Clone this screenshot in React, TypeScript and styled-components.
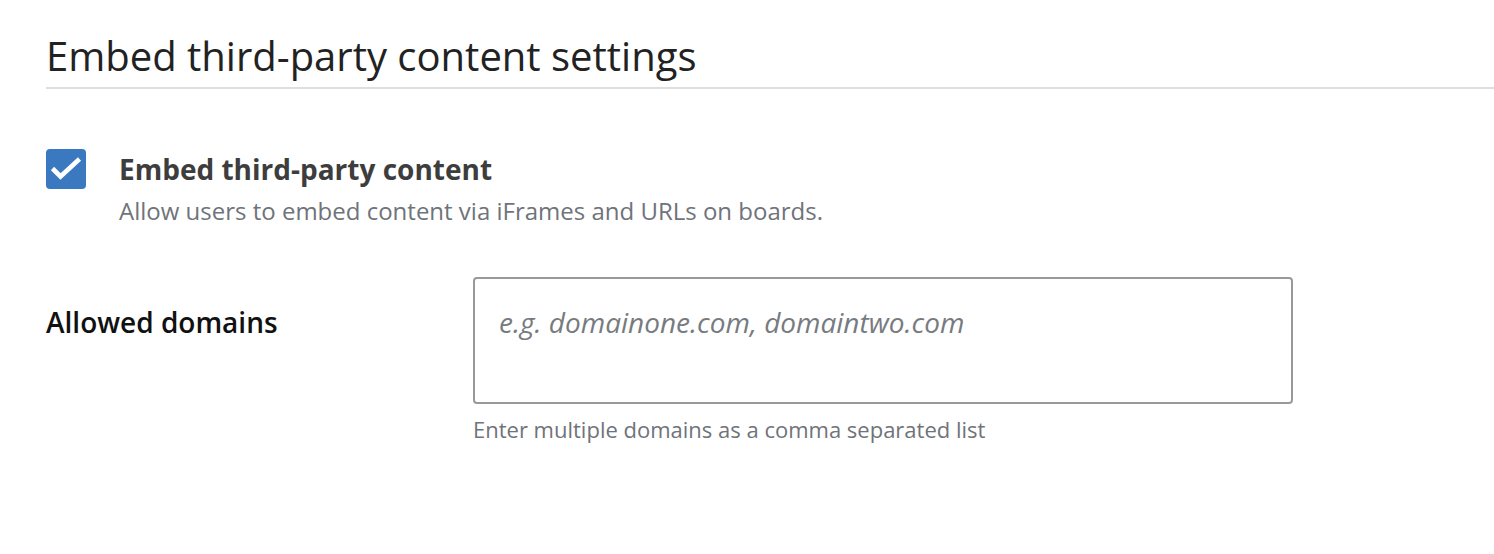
import React from 'react';
import styled, { createGlobalStyle } from 'styled-components';

const GlobalStyle = createGlobalStyle`
  body {
    margin: 0;
    background: #fff;
    font-family: 'Open Sans', 'Noto Sans', sans-serif;
  }
`;

const Page = styled.div`
  padding: 31px 0 0 46px;
`;

const Title = styled.h1`
  margin: 0;
  padding-bottom: 6px;
  font-size: 40px;
  font-weight: 400;
  line-height: 50px;
  color: #222;
  border-bottom: 2px solid #dedede;
`;

const CheckRow = styled.div`
  display: flex;
  align-items: flex-start;
  gap: 33px;
  margin-top: 60px;
`;

const Box = styled.div`
  width: 40px;
  height: 40px;
  flex-shrink: 0;
  border-radius: 4px;
  background: #3a78c0;
`;

const CheckText = styled.div`
  display: flex;
  flex-direction: column;
`;

const CheckLabel = styled.div`
  font-size: 28px;
  font-weight: 700;
  line-height: 40px;
  color: #3d3d3d;
`;

const CheckHint = styled.div`
  margin-top: 6px;
  font-size: 24px;
  line-height: 32px;
  color: #6f737a;
`;

const FieldRow = styled.div`
  display: grid;
  grid-template-columns: 427px 820px;
  margin-top: 50px;
`;

const FieldLabel = styled.label`
  padding-top: 27px;
  font-size: 28px;
  font-weight: 600;
  line-height: 36px;
  color: #111;
`;

const FieldBody = styled.div`
  display: flex;
  flex-direction: column;
`;

const Input = styled.textarea`
  box-sizing: border-box;
  width: 820px;
  height: 127px;
  padding: 25px 24px;
  border: 2px solid #999;
  border-radius: 4px;
  resize: none;
  font-family: 'Open Sans', 'Noto Sans', sans-serif;
  font-size: 28px;
  line-height: 36px;
  color: #222;
  outline: none;

  &::placeholder {
    font-style: italic;
    color: #777b80;
  }
`;

const Help = styled.div`
  margin-top: 10px;
  font-size: 22px;
  line-height: 30px;
  color: #6f737a;
`;

export default function App() {
  return (
    <>
      <GlobalStyle />
      <Page>
        <Title>Embed third-party content settings</Title>
        <CheckRow>
          <Box>
            <svg width="40" height="40" viewBox="0 0 40 40">
              <path d="M6.5 19.5 L14.5 27.5 L33.5 10" fill="none" stroke="#fff" strokeWidth="4.6" />
            </svg>
          </Box>
          <CheckText>
            <CheckLabel>Embed third-party content</CheckLabel>
            <CheckHint>Allow users to embed content via iFrames and URLs on boards.</CheckHint>
          </CheckText>
        </CheckRow>
        <FieldRow>
          <FieldLabel htmlFor="domains">Allowed domains</FieldLabel>
          <FieldBody>
            <Input id="domains" placeholder="e.g. domainone.com, domaintwo.com" />
            <Help>Enter multiple domains as a comma separated list</Help>
          </FieldBody>
        </FieldRow>
      </Page>
    </>
  );
}
